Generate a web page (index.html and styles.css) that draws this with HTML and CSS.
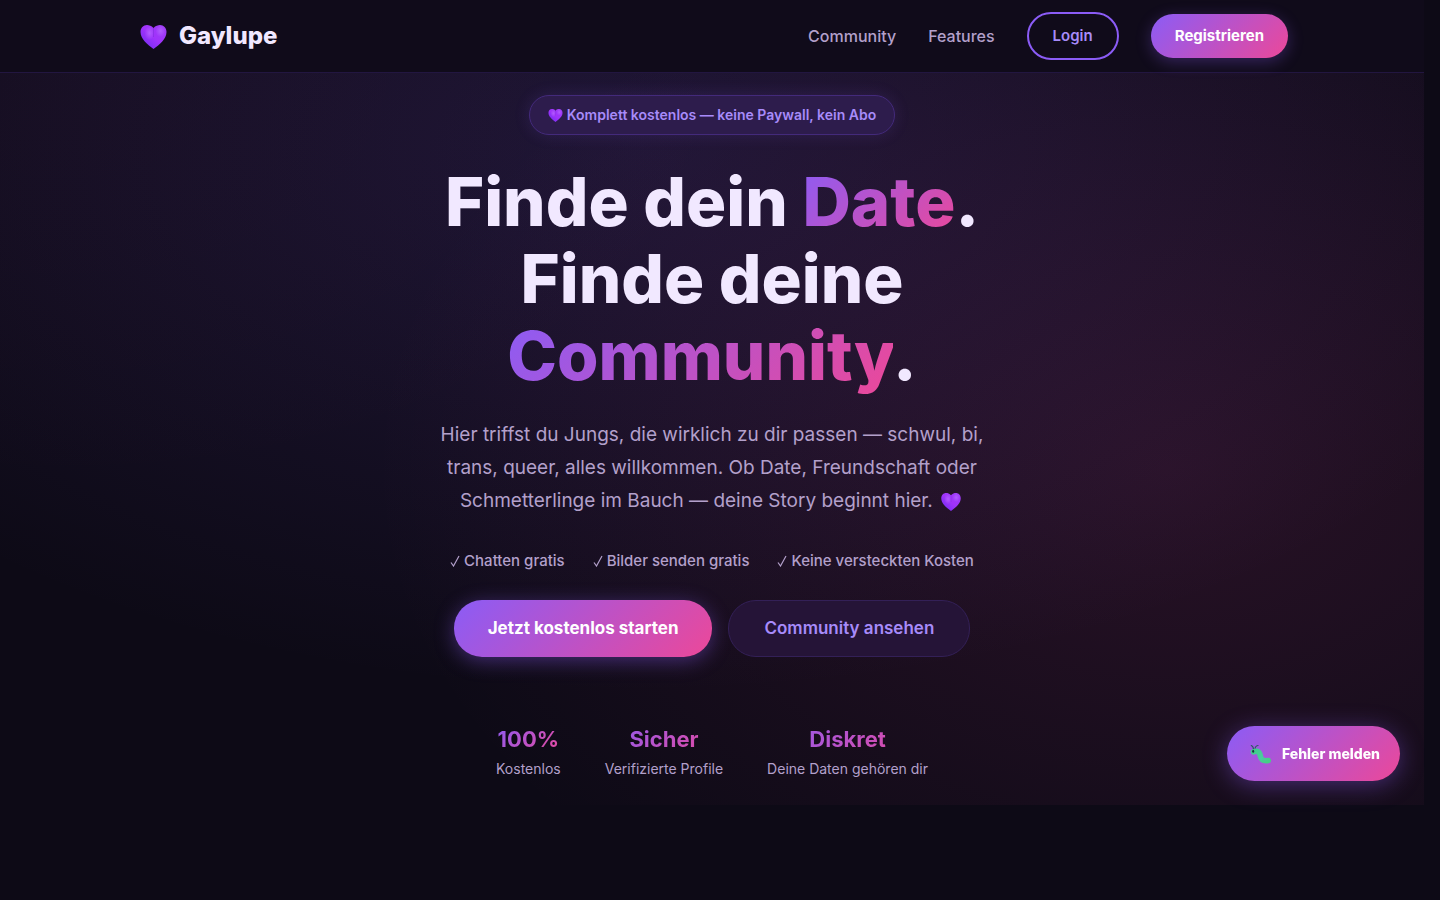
FILE: index.html
```html
<!DOCTYPE html>
<html lang="de">
<head>
  <meta charset="UTF-8" />
  <meta name="viewport" content="width=device-width, initial-scale=1.0" />
  <title>Gaylupe</title>
  <link rel="stylesheet" href="styles.css">
</head>
<body>
  <!-- shared icons -->
  <svg class="sprite" aria-hidden="true">
    <defs>
      <linearGradient id="heart-fill" x1="1" y1="0" x2="0" y2="1">
        <stop offset="0" stop-color="#9d3df5" />
        <stop offset="0.5" stop-color="#a033fb" />
        <stop offset="1" stop-color="#6a2bf0" />
      </linearGradient>
      <radialGradient id="heart-shine">
        <stop offset="0" stop-color="#b565ff" stop-opacity="0.8" />
        <stop offset="1" stop-color="#b565ff" stop-opacity="0" />
      </radialGradient>
      <symbol id="heart" viewBox="0 0 26 24">
        <path fill="url(#heart-fill)" d="M13 3C11 .8 8.600 0 6.500 0 2.800 0 0 3 0 7c0 7 7 12.500 13 17 6-4.500 13-10 13-17 0-4-2.800-7-6.500-7C17.400 0 15 .8 13 3z" />
        <ellipse fill="url(#heart-shine)" cx="9" cy="8" rx="5" ry="7" />
        <ellipse fill="url(#heart-shine)" cx="20" cy="6" rx="5" ry="6" />
        <path fill="none" stroke="#7a25d8" stroke-opacity="0.5" d="M13 3v9" />
      </symbol>
      <symbol id="check" viewBox="0 0 10 12">
        <path fill="none" stroke="currentColor" stroke-width="1.200" d="M1 7.500l2.500 3.500L9 1" />
      </symbol>
    </defs>
  </svg>

  <header class="navbar">
    <nav class="nav-container">
      <a href="#" class="logo">
        <svg class="heart-logo" aria-hidden="true"><use href="#heart" /></svg>
        <span>Gaylupe</span>
      </a>
      <div class="nav-links">
        <a href="#community" class="nav-link">Community</a>
        <a href="#features" class="nav-link">Features</a>
        <a href="#login" class="btn-login">Login</a>
        <a href="#register" class="btn-register">Registrieren</a>
      </div>
    </nav>
  </header>

  <main class="hero">
    <div class="badge">
      <svg class="heart-badge" aria-hidden="true"><use href="#heart" /></svg>
      <span>Komplett kostenlos — keine Paywall, kein Abo</span>
    </div>
    <h1>
      Finde dein <span class="gradient-text">Date</span>.<br>
      Finde deine <span class="gradient-text">Community</span>.
    </h1>
    <p class="hero-text">
      Hier triffst du Jungs, die wirklich zu dir passen — schwul, bi, trans, queer, alles willkommen. Ob Date, Freundschaft oder Schmetterlinge im Bauch — deine Story beginnt hier.
      <svg class="heart-text" aria-hidden="true"><use href="#heart" /></svg>
    </p>
    <ul class="perks">
      <li><svg class="check" aria-hidden="true"><use href="#check" /></svg>Chatten gratis</li>
      <li><svg class="check" aria-hidden="true"><use href="#check" /></svg>Bilder senden gratis</li>
      <li><svg class="check" aria-hidden="true"><use href="#check" /></svg>Keine versteckten Kosten</li>
    </ul>
    <div class="hero-buttons">
      <a href="#register" class="btn btn-primary">Jetzt kostenlos starten</a>
      <a href="#community" class="btn btn-secondary">Community ansehen</a>
    </div>
    <div class="stats">
      <div class="stat">
        <strong>100%</strong>
        <span>Kostenlos</span>
      </div>
      <div class="stat">
        <strong>Sicher</strong>
        <span>Verifizierte Profile</span>
      </div>
      <div class="stat">
        <strong>Diskret</strong>
        <span>Deine Daten gehören dir</span>
      </div>
    </div>
  </main>

  <button type="button" class="report-btn">
    <svg class="bug" viewBox="0 0 22 20" aria-hidden="true">
      <defs>
        <linearGradient id="bug-fill" x1="0" y1="0" x2="1" y2="1">
          <stop offset="0" stop-color="#3fd08a" />
          <stop offset="0.6" stop-color="#4cc9a0" />
          <stop offset="1" stop-color="#46cf86" />
        </linearGradient>
      </defs>
      <path fill="none" stroke="#2b5a62" stroke-width="1.200" stroke-linecap="round" d="M3.500 5.500C3.500 3.500 2.500 2 1.300 1.500M5 5.500C5 3.500 6.200 1.800 8 1.500" />
      <path fill="none" stroke="url(#bug-fill)" stroke-width="5.600" stroke-linecap="round" stroke-linejoin="round" d="M3.500 7.800C8.500 6 9.500 8.500 10.200 11.500c.8 4.500 3 5.700 8 5" />
      <ellipse fill="#1d3340" cx="3.200" cy="7.200" rx="1" ry="1.500" />
    </svg>
    <span>Fehler melden</span>
  </button>
</body>
</html>
```

FILE: styles.css
```css
* {
  margin: 0;
  padding: 0;
  box-sizing: border-box;
}

:root {
  --bg: #0d0a16;
  --text: #f1e8ff;
  --muted: #b3a0cb;
  --purple: #8b5cf6;
  --lilac: #a78bfa;
  --gradient: linear-gradient(135deg, #8b5cf6, #ec4899);
}

body {
  min-height: 100vh;
  padding-right: 16px;
  background: var(--bg);
  color: var(--text);
  font-family: Inter, "Liberation Sans", sans-serif;
}

a {
  color: inherit;
  text-decoration: none;
}

.sprite {
  position: absolute;
  width: 0;
  height: 0;
}

/* navbar */
.navbar {
  background: #100b1a;
  border-bottom: 1px solid #221640;
}

.nav-container {
  display: flex;
  align-items: center;
  justify-content: space-between;
  max-width: 1200px;
  height: 72px;
  margin: 0 auto;
  padding: 0 24px;
}

.logo {
  display: flex;
  align-items: center;
  gap: 12px;
  padding-left: 4px;
  font-size: 24px;
  font-weight: 800;
  line-height: 28px;
}

.heart-logo {
  width: 27px;
  height: 24px;
  margin-top: 2px;
}

.nav-links {
  display: flex;
  align-items: center;
  gap: 32px;
}

.nav-link {
  color: var(--muted);
  font-size: 16px;
  font-weight: 500;
  line-height: 20px;
}

.btn-login,
.btn-register {
  padding: 12px 24px;
  border-radius: 24px;
  font-size: 15px;
  line-height: 20px;
}

.btn-login {
  border: 2px solid var(--purple);
  color: var(--lilac);
  font-weight: 600;
}

.btn-register {
  background: var(--gradient);
  color: #fff;
  font-weight: 700;
  box-shadow: 0 4px 16px rgba(139, 92, 246, 0.3);
}

/* hero */
.hero {
  display: flex;
  flex-direction: column;
  align-items: center;
  padding: 22px 24px 26px;
  background:
    radial-gradient(ellipse 50% 60% at 5% 0%, rgba(236, 72, 153, 0.02), transparent),
    radial-gradient(ellipse 70% 75% at 45% 10%, rgba(139, 92, 246, 0.14), transparent),
    radial-gradient(ellipse 56% 75% at 82% 54%, rgba(236, 72, 153, 0.12), transparent);
  text-align: center;
}

.badge {
  display: flex;
  align-items: center;
  gap: 4px;
  height: 40px;
  padding: 0 18px;
  border: 1px solid #432a7b;
  border-radius: 20px;
  background: #2d1c4c;
  color: var(--lilac);
  font-size: 14px;
  font-weight: 600;
  line-height: 20px;
  box-shadow: 0 0 16px rgba(139, 92, 246, 0.15);
}

.heart-badge {
  width: 15px;
  height: 13px;
}

h1 {
  max-width: 720px;
  margin-top: 28px;
  font-size: 67px;
  font-weight: 800;
  line-height: 77px;
}

.gradient-text {
  background: var(--gradient);
  background-clip: text;
  -webkit-background-clip: text;
  color: transparent;
}

.hero-text {
  max-width: 560px;
  margin-top: 24px;
  color: var(--muted);
  font-size: 19px;
  line-height: 33px;
}

.heart-text {
  width: 20px;
  height: 18px;
  margin: 0 3px;
  vertical-align: -4px;
}

.perks {
  display: flex;
  gap: 28px;
  margin-top: 32px;
  color: var(--muted);
  font-size: 15px;
  font-weight: 500;
  line-height: 24px;
  list-style: none;
}

.check {
  width: 10px;
  height: 12px;
  margin-right: 4px;
  vertical-align: -1px;
}

.hero-buttons {
  display: flex;
  gap: 16px;
  margin-top: 27px;
}

.btn {
  padding: 18px 34px;
  border-radius: 28px;
  font-size: 17px;
  line-height: 21px;
}

.btn-primary {
  background: var(--gradient);
  color: #fff;
  font-weight: 700;
  box-shadow: 0 4px 20px rgba(139, 92, 246, 0.4);
}

.btn-secondary {
  padding: 17px 35px;
  border: 1px solid #332057;
  background: #251437;
  color: var(--lilac);
  font-weight: 600;
}

.stats {
  display: flex;
  gap: 44px;
  margin-top: 64px;
}

.stat {
  display: flex;
  flex-direction: column;
  gap: 2px;
}

.stat strong {
  background: var(--gradient);
  background-clip: text;
  -webkit-background-clip: text;
  color: transparent;
  font-size: 22px;
  font-weight: 700;
  line-height: 36px;
}

.stat span {
  color: var(--muted);
  font-size: 14px;
  line-height: 20px;
}

/* floating report button */
.report-btn {
  position: fixed;
  right: 40px;
  bottom: 119px;
  display: flex;
  align-items: center;
  gap: 10px;
  height: 55px;
  padding: 0 20px 0 23px;
  border: none;
  border-radius: 28px;
  background: var(--gradient);
  color: #fff;
  font-family: inherit;
  font-size: 14px;
  font-weight: 800;
  cursor: pointer;
  box-shadow: 0 4px 24px rgba(139, 92, 246, 0.4);
}

.bug {
  width: 22px;
  height: 20px;
}
```
